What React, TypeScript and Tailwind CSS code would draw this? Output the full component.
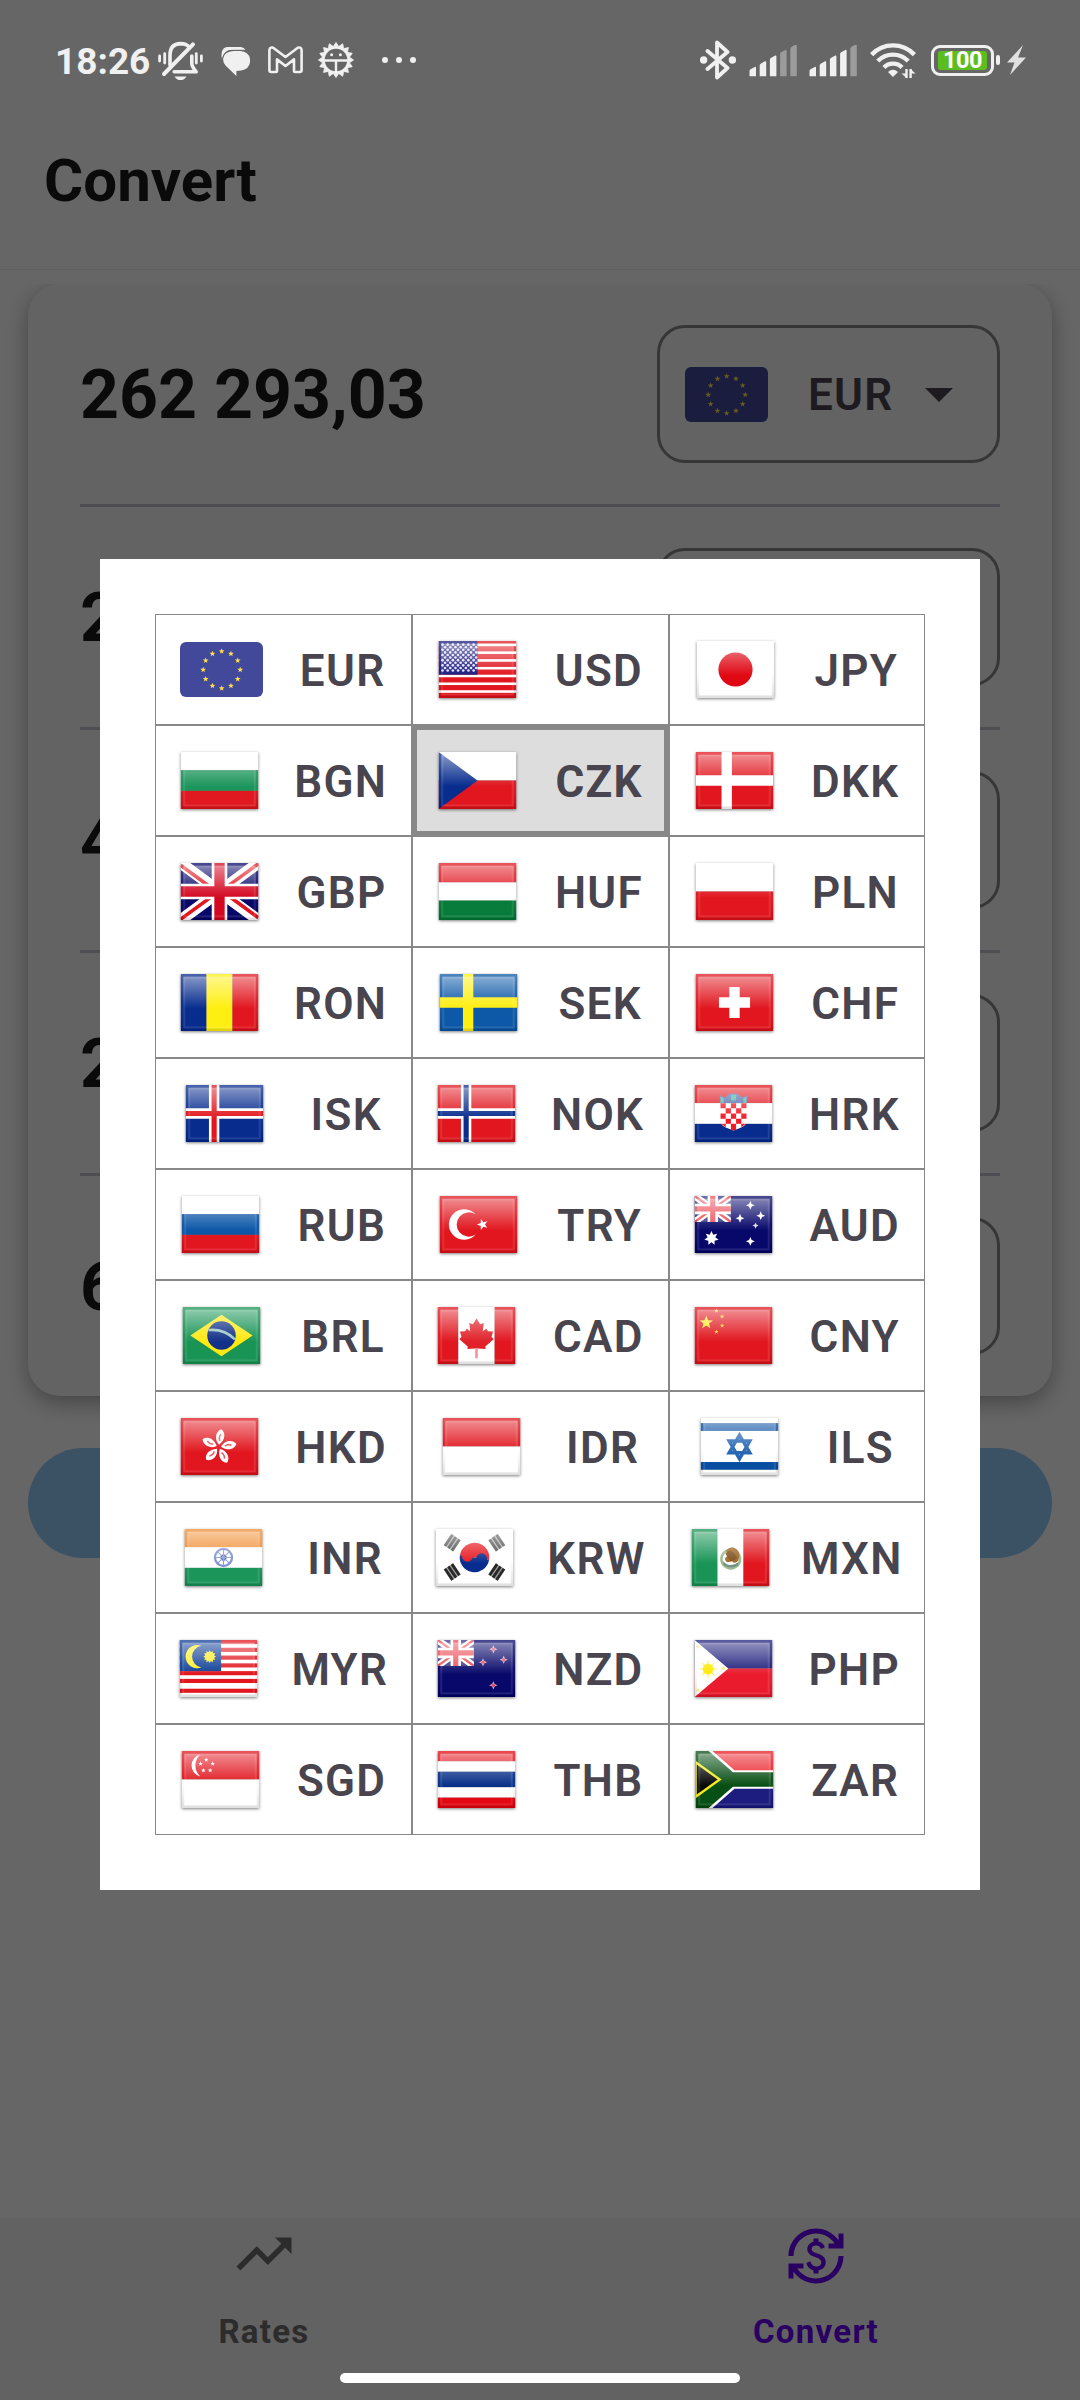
import type { ReactNode } from "react";
import { MdCurrencyExchange, MdTrendingUp } from "react-icons/md";

const RED = "#e00f18";
const NAVY = "#00268a";
const INK = "#000066";

/* ---------- flag drawing helpers (30 x 22 grid) ---------- */

function starPoints(cx: number, cy: number, r: number, n = 5, inner = 0.42, turn = 0) {
  const pts: string[] = [];
  for (let i = 0; i < n * 2; i++) {
    const rad = i % 2 === 0 ? r : r * inner;
    const a = -Math.PI / 2 + turn + (i * Math.PI) / n;
    pts.push(`${(cx + rad * Math.cos(a)).toFixed(2)},${(cy + rad * Math.sin(a)).toFixed(2)}`);
  }
  return pts.join(" ");
}

type StarProps = { x: number; y: number; r: number; n?: number; inner?: number; fill: string; turn?: number };
const Star = ({ x, y, r, n, inner, fill, turn }: StarProps) => (
  <polygon points={starPoints(x, y, r, n, inner, turn)} fill={fill} />
);

type Band = [string, number];
const Rows = ({ bands }: { bands: Band[] }) => {
  let y = 0;
  return (
    <>
      {bands.map(([c, h], i) => {
        const el = <rect key={i} x="0" y={y} width="30" height={h} fill={c} />;
        y += h;
        return el;
      })}
    </>
  );
};
const Cols = ({ bands }: { bands: Band[] }) => {
  let x = 0;
  return (
    <>
      {bands.map(([c, w], i) => {
        const el = <rect key={i} x={x} y="0" width={w} height="22" fill={c} />;
        x += w;
        return el;
      })}
    </>
  );
};

const Nordic = ({ bg, outer, inner, x }: { bg: string; outer: string; inner?: string; x: number }) => (
  <>
    <rect width="30" height="22" fill={bg} />
    <path d={`M${x} 0h4v22h-4zM0 9h30v4H0z`} fill={outer} />
    {inner && <path d={`M${x + 1} 0h2v22h-2zM0 10h30v2H0z`} fill={inner} />}
  </>
);

const Canton = () => (
  <svg x="0" y="0" width="14" height="10" viewBox="0 0 14 10">
    <rect width="14" height="10" fill={INK} />
    <path d="M0 0L14 10M14 0L0 10" stroke="#fff" strokeWidth="2.6" />
    <path d="M0 0L14 10M14 0L0 10" stroke={RED} strokeWidth="0.9" />
    <path d="M5 0h4v10H5zM0 3h14v4H0z" fill="#fff" />
    <path d="M6 0h2v10H6zM0 4h14v2H0z" fill="#e8202e" />
    <rect width="14" height="10" fill="#fff" opacity="0.2" />
  </svg>
);

const trigram = (x: number, y: number, turn: number, c: string) => (
  <g transform={`translate(${x} ${y}) rotate(${turn})`} stroke={c} strokeWidth="1.1">
    <rect x="-2.6" y="-2.2" width="5.2" height="4.4" fill={c} fillOpacity="0.45" stroke="none" />
    <path d="M-2.6 -1.6h5.2M-2.6 0h5.2M-2.6 1.6h5.2" />
  </g>
);

const usReds = [2, 5, 8, 11, 14, 17, 20];
const myReds = [0, 3, 6, 9, 12, 15, 18.8];

const FLAGS: Record<string, ReactNode> = {
  USD: (
    <>
      <rect width="30" height="22" fill="#fff" />
      <rect width="30" height="1" fill={RED} />
      {usReds.map((y) => (
        <rect key={y} y={y} width="30" height="2" fill={RED} />
      ))}
      <rect width="15" height="13" fill="#14147c" />
      {Array.from({ length: 11 }, (_, r) =>
        Array.from({ length: 7 }, (_, c) => (
          <circle key={`${r}-${c}`} cx={1.5 + c * 2 + (r % 2)} cy={1.4 + r} r="0.5" fill="#e4e4f6" />
        )),
      )}
    </>
  ),
  JPY: (
    <>
      <rect width="30" height="22" fill="#fff" />
      <circle cx="15" cy="11" r="6.6" fill="#de000c" />
    </>
  ),
  BGN: <Rows bands={[["#fff", 7], ["#159256", 8], ["#df1219", 7]]} />,
  CZK: (
    <>
      <Rows bands={[["#fff", 11], [RED, 11]]} />
      <path d="M0 0L15 11L0 22z" fill={NAVY} />
    </>
  ),
  DKK: <Nordic bg={RED} outer="#fff" x={10} />,
  GBP: (
    <>
      <rect width="30" height="22" fill={INK} />
      <path d="M0 0L30 22M30 0L0 22" stroke="#fff" strokeWidth="4.4" />
      <path d="M0 .9L13 10.4M30 21.1L17 11.6M30 .3L17 9.8M0 21.7L13 12.2" stroke={RED} strokeWidth="1.4" />
      <path d="M12 0h6v22h-6zM0 8h30v6H0z" fill="#fff" />
      <path d="M13 0h4v22h-4zM0 9h30v4H0z" fill="#d3001b" />
    </>
  ),
  HUF: <Rows bands={[[RED, 7.5], ["#fff", 7], ["#007834", 7.5]]} />,
  PLN: <Rows bands={[["#fff", 11], [RED, 11]]} />,
  RON: <Cols bands={[[NAVY, 10], ["#ffee0a", 10], [RED, 10]]} />,
  SEK: <Nordic bg="#0653a4" outer="#ffee0a" x={9} />,
  CHF: (
    <>
      <rect width="30" height="22" fill={RED} />
      <path d="M13 5h4v4h4v4h-4v4h-4v-4H9V9h4z" fill="#fff" />
    </>
  ),
  ISK: <Nordic bg={NAVY} outer="#fff" inner={RED} x={9} />,
  NOK: <Nordic bg={RED} outer="#fff" inner={NAVY} x={9} />,
  HRK: (
    <>
      <Rows bands={[[RED, 7], ["#fff", 8], [NAVY, 7]]} />
      <path d="M10 7.2L9.6 4l2 .8 1.6-1.3 1.8-.3 1.8.3 1.6 1.3 2-.8-.4 3.2z" fill="#4a63a4" />
      <path d="M10 4.6l1.2.4v2H10zM14 3.8h2V6h-2zM18.8 5l1.2-.4V7h-1.2z" fill="#3db4a0" />
      <path d="M10 7h10v6.6q0 2-2 2.8l-3 1.2-3-1.2q-2-.8-2-2.8z" fill="#fff" />
      <path
        d="M10 7h2v2h-2zM14 7h2v2h-2zM18 7h2v2h-2zM12 9h2v2h-2zM16 9h2v2h-2zM10 11h2v2h-2zM14 11h2v2h-2zM18 11h2v2h-2zM12 13h2v2h-2zM16 13h2v2h-2zM14 15h2v2.4l-1 .2-1-.2zM10.3 15H12v1.4zM18 15h1.7L18 16.4z"
        fill="#f01420"
      />
    </>
  ),
  RUB: <Rows bands={[["#fff", 7], ["#0552a5", 8], [RED, 7]]} />,
  TRY: (
    <>
      <rect width="30" height="22" fill={RED} />
      <path d="M13.9 7.1A5.9 5.9 0 1 0 13.9 14.9A4.7 4.7 0 1 1 13.9 7.1z" fill="#fff" />
      <Star x={16.6} y={11} r={2.2} fill="#fff" turn={-Math.PI / 2} />
    </>
  ),
  AUD: (
    <>
      <rect width="30" height="22" fill={INK} />
      <Canton />
      <Star x={6.5} y={16.3} r={2.8} n={7} inner={0.55} fill="#fff" />
      <Star x={21.5} y={3.6} r={1.7} n={4} fill="#fff" />
      <Star x={17.5} y={8.6} r={1.7} n={4} fill="#fff" />
      <Star x={25.5} y={7.6} r={1.7} n={4} fill="#fff" />
      <Star x={23.5} y={11.4} r={1.2} n={4} fill="#dcdcf0" />
      <Star x={21.5} y={17.5} r={1.7} n={4} fill="#fff" />
    </>
  ),
  BRL: (
    <>
      <rect width="30" height="22" fill="#129150" />
      <path d="M3 11L15 3L27 11L15 19z" fill="#ffe80a" />
      <circle cx="15" cy="11" r="5.5" fill="#0a2a86" />
      <path d="M10 8.9q6-.6 10.2 3.6" stroke="#9cc8c4" strokeWidth="1" fill="none" />
    </>
  ),
  CAD: (
    <>
      <Cols bands={[[RED, 8], ["#fff", 14], [RED, 8]]} />
      <path
        d="M15 4.4L16.4 6.7L17.8 6.2L17.4 9.4L18.8 8.4L19.4 9.4L21.4 9.5L20.8 11.5L21.6 12.4L18.4 15.2L18.5 16.2L15.6 16H14.4L11.5 16.2L11.6 15.2L8.4 12.4L9.2 11.5L8.6 9.5L10.6 9.4L11.2 8.4L12.6 9.4L12.2 6.2L13.6 6.7z"
        fill="#e01a22"
      />
      <rect x="14.5" y="15.8" width="1" height="4" fill="#f0909a" />
    </>
  ),
  CNY: (
    <>
      <rect width="30" height="22" fill={RED} />
      <Star x={4.5} y={6} r={2.7} fill="#ffee22" />
      <Star x={8.4} y={1.5} r={0.9} fill="#ffd21e" />
      <Star x={10.6} y={3.7} r={0.9} fill="#ffd21e" />
      <Star x={10.6} y={7.2} r={0.9} fill="#ffc21e" />
      <Star x={8.4} y={9.6} r={0.9} fill="#ffc21e" />
    </>
  ),
  HKD: (
    <>
      <rect width="30" height="22" fill={RED} />
      {[10, 82, 154, 226, 298].map((a) => (
        <g key={a} transform={`translate(14.7 11.2) rotate(${a})`}>
          <path d="M0 -.9C-2.6 -2.8-2 -6-.2 -6.9C1.6 -6 2.2 -3.4 0 -.9z" fill="#fff" />
          <path d="M0 -2.4q-.8 -1.3 0 -2.6" stroke="#ea5058" strokeWidth="0.6" fill="none" />
        </g>
      ))}
    </>
  ),
  IDR: <Rows bands={[[RED, 11], ["#fff", 11]]} />,
  ILS: (
    <>
      <Rows bands={[["#fff", 2], ["#0049a0", 3], ["#fff", 12], ["#0049a0", 3], ["#fff", 2]]} />
      <path d="M15 6.6L19 13.4H11zM15 15.8L11 8.9H19z" fill="none" stroke="#1f62b0" strokeWidth="1.3" />
    </>
  ),
  INR: (
    <>
      <Rows bands={[["#f08a2c", 7], ["#fff", 8], ["#159256", 7]]} />
      <circle cx="15" cy="11" r="3.3" fill="none" stroke="#7f90cc" strokeWidth="0.9" />
      <circle cx="15" cy="11" r="1.2" fill="#3a56ac" />
      <path
        d="M15 8v6M12 11h6M12.9 8.9l4.2 4.2M17.1 8.9l-4.2 4.2"
        stroke="#8c9cd4"
        strokeWidth="0.45"
      />
    </>
  ),
  KRW: (
    <>
      <rect width="30" height="22" fill="#fff" />
      <g transform="rotate(10 15 11)">
        <path d="M9.3 11a5.7 5.7 0 0 1 11.4 0z" fill="#e6141c" />
        <path d="M9.3 11a5.7 5.7 0 0 0 11.4 0z" fill={NAVY} />
        <circle cx="12.2" cy="11" r="2.1" fill="#e6141c" />
        <circle cx="17.8" cy="11" r="2.1" fill={NAVY} />
      </g>
      {trigram(6.4, 5.3, -56, "#444")}
      {trigram(23.6, 5.3, 56, "#444")}
      {trigram(6.4, 16.6, 56, "#222")}
      {trigram(23.6, 16.6, -56, "#222")}
    </>
  ),
  MXN: (
    <>
      <Cols bands={[["#129150", 10], ["#fff", 10], [RED, 10]]} />
      <circle cx="15.1" cy="11.6" r="3.6" fill="none" stroke="#9ab88a" strokeWidth="1" />
      <path
        d="M13.2 8.4q2-2.4 4.2-.6q1.8 1.8.6 4.4q-1.4 1.6-2.4.2l-1.8.4q-1.4-.6-.6-2l1.4-.6z"
        fill="#9a6220"
      />
      <path d="M13 9.5q1.5-2 3-.5t1.5 2.5l-2.5 1z" fill="#7a4c18" />
      <path d="M12.2 12.4q2.6 2.8 5.8.4v1.2q-3 1.8-5.8-.2z" fill="#6f8f86" />
    </>
  ),
  MYR: (
    <>
      <rect width="30" height="22" fill="#fff" />
      {myReds.map((y) => (
        <rect key={y} y={y} width="30" height="1.6" fill={RED} />
      ))}
      <rect width="16" height="12" fill="#093a94" />
      <path d="M8.4 2.2A4.5 4.5 0 1 0 8.4 10.6A4.25 4.25 0 0 1 8.4 2.2z" fill="#ffee22" />
      <Star x={11.6} y={6.4} r={2.5} n={12} inner={0.7} fill="#ffee22" />
    </>
  ),
  NZD: (
    <>
      <rect width="30" height="22" fill={INK} />
      <Canton />
      {[
        [21.5, 3.6],
        [17.5, 8.6],
        [25.5, 7.6],
        [21.5, 17.5],
      ].map(([x, y]) => (
        <g key={`${x}-${y}`}>
          <Star x={x} y={y} r={1.6} n={4} fill="#d8a0bc" />
          <circle cx={x} cy={y} r="0.6" fill="#e0405a" />
        </g>
      ))}
    </>
  ),
  PHP: (
    <>
      <Rows bands={[["#191979", 11], ["#ea1428", 11]]} />
      <path d="M0 0L13 11L0 22z" fill="#fff" />
      <Star x={5.2} y={11.2} r={4} n={8} inner={0.4} fill="#fff27a" />
      <circle cx="5.2" cy="11.2" r="2" fill="#ffe800" />
      <Star x={1.4} y={2.6} r={1} fill="#ffe95a" />
      <Star x={1.4} y={19.4} r={1} fill="#ffe95a" />
      <Star x={11} y={11} r={1} fill="#ffe95a" />
    </>
  ),
  SGD: (
    <>
      <Rows bands={[[RED, 11], ["#fff", 11]]} />
      <path d="M7.2 1.4A4.3 4.3 0 0 0 7.2 9.8A5.6 5.6 0 0 1 7.2 1.4z" fill="#fff" />
      {[
        [9.5, 3.4],
        [12, 4.9],
        [7.3, 4.9],
        [8.4, 7.5],
        [11, 7.5],
      ].map(([x, y]) => (
        <Star key={`${x}-${y}`} x={x} y={y} r={0.9} fill="#fff" />
      ))}
    </>
  ),
  THB: <Rows bands={[["#e2000c", 4], ["#fff", 4], ["#002a84", 6], ["#fff", 4], ["#e2000c", 4]]} />,
  ZAR: (
    <>
      <Rows bands={[["#e8141c", 11], ["#16167c", 11]]} />
      <path d="M0 0h6.5L15 7.4h15v7.2H15L6.5 22H0z" fill="#fff" />
      <path d="M0 0h5L14.4 8.2H30v5.6H14.4L5 22H0z" fill="#004a0e" />
      <path d="M0 4.3L9.3 11L0 17.7z" fill="#000" stroke="#f2ea12" strokeWidth="0.9" />
    </>
  ),
};

const EuFlag = () => (
  <svg width="83" height="55" viewBox="0 0 83 55" className="block shrink-0">
    <rect width="83" height="55" rx="6" fill="#42499a" />
    {Array.from({ length: 12 }, (_, i) => {
      const a = (i * Math.PI) / 6;
      return (
        <polygon
          key={i}
          points={starPoints(41.7 + 18.5 * Math.sin(a), 27.8 - 18.5 * Math.cos(a), 3)}
          fill="#ffe050"
        />
      );
    })}
  </svg>
);

const GlossDefs = () => (
  <svg width="0" height="0" className="absolute">
    <defs>
      <linearGradient id="gloss" x1="0" y1="0" x2="0" y2="1">
        <stop offset="0" stopColor="#fff" stopOpacity="0.52" />
        <stop offset="0.5" stopColor="#fff" stopOpacity="0.12" />
        <stop offset="0.62" stopColor="#fff" stopOpacity="0.03" />
        <stop offset="1" stopColor="#fff" stopOpacity="0.03" />
      </linearGradient>
      <linearGradient id="rim" x1="0" y1="0" x2="0" y2="1">
        <stop offset="0" stopColor="#fff" stopOpacity="0.28" />
        <stop offset="0.5" stopColor="#fff" stopOpacity="0.06" />
        <stop offset="1" stopColor="#000" stopOpacity="0.12" />
      </linearGradient>
    </defs>
  </svg>
);

const Flag = ({ code }: { code: string }) =>
  code === "EUR" ? (
    <EuFlag />
  ) : (
    <svg
      width="83"
      height="63"
      viewBox="-1 -1.15 32 24.3"
      className="block shrink-0 drop-shadow-[0_1.5px_1.5px_rgba(0,0,0,0.5)]"
    >
      <svg x="0" y="0" width="30" height="22" viewBox="0 0 30 22">
        {FLAGS[code]}
        <rect x="1" y="1" width="28" height="20" fill="url(#gloss)" />
        <rect x="0.5" y="0.5" width="29" height="21" fill="none" stroke="url(#rim)" strokeWidth="1" />
        <rect x="1.4" y="1.4" width="27.2" height="19.2" fill="none" stroke="#fff" strokeOpacity="0.1" strokeWidth="0.8" />
      </svg>
    </svg>
  );

/* ---------- status bar ---------- */

const Signal = ({ level }: { level: number }) => (
  <svg width="48" height="32" viewBox="0 0 48 32">
    {[8, 13.6, 19.3, 25, 30.4].map((h, i) => (
      <path
        key={i}
        d={`M${0.5 + i * 10.2} 31.5v${-(h - 3)}q0 -1 1 -1.6l4.3 -2.4q1.2 -.4 1.2 .8v${h}q0 .6 -.6 .6h-5.3q-.6 0 -.6 -.6z`}
        transform="translate(0 -.6)"
        fill={i < level ? "#f0f0f0" : "#9b9b9b"}
      />
    ))}
  </svg>
);

const StatusBar = () => (
  <div className="relative z-20 flex h-[120px] items-center pl-[55px] pr-[54px] text-[#f0f0f0]">
    <span className="mt-[3px] w-[103px] text-[37px] font-bold leading-[44px]">18:26</span>
    {/* muted bell */}
    <svg width="45" height="40" viewBox="0 0 45 40" className="mt-[2px]" fill="none" stroke="currentColor" strokeLinecap="round">
      <path d="M12 24V14Q12 3 22.5 2.6Q29 2.8 31.4 6.4" strokeWidth="3.6" />
      <path d="M6 33L35 3.4" strokeWidth="4" />
      <path d="M33.8 15v7.5q0 3 4.4 8.3h-22" strokeWidth="3.6" strokeLinejoin="round" />
      <path d="M16.5 35.4h12q-2.2 3.6-6 3.6t-6-3.6z" fill="currentColor" stroke="none" />
      <path d="M1.6 15v5M43.4 15v5" strokeWidth="2.8" />
      <path d="M6.7 12.6v9.4M38.3 12.6v9.4" strokeWidth="2.8" />
    </svg>
    {/* chat */}
    <svg width="29" height="30" viewBox="0 0 29 30" className="ml-[18px] mt-[2px]">
      <path d="M1 13Q0 10 .8 6Q2 1.6 6 1h14q3 .4 4.6 3L9 4Q3 5.4 1 13z" fill="#f0f0f0" />
      <path d="M12.5 5h6.6q10 1 10 9.6t-9 10L15.4 25v5L5 20Q2 17 2 13q1-7.4 10.5-8z" fill="#f0f0f0" />
      <path d="M1.6 12.5Q3 4.5 11 4.3h14" stroke="#666" strokeWidth=".9" fill="none" />
    </svg>
    {/* mail */}
    <svg width="35" height="28" viewBox="0 0 35 28" className="ml-[18px]" fill="none" stroke="currentColor" strokeLinejoin="round">
      <path
        d="M1.4 24V4.2Q1.8 .6 5.2 1.7L17.5 11 29.8 1.7Q33.2 .6 33.6 4.2V24q0 2-2 2h-4.4q-1.2 0-1.2-1.2V13.4L17.5 20 9 13.4v11.4Q9 26 7.8 26H3.4q-2 0-2-2z"
        strokeWidth="2.6"
      />
    </svg>
    {/* gear robot */}
    <svg width="36" height="36" viewBox="0 0 36 36" className="ml-[15px]">
      <polygon
        points={starPoints(18, 18, 17.6, 16, 0.78)}
        fill="#f0f0f0"
        stroke="#f0f0f0"
        strokeWidth="0.8"
        strokeLinejoin="round"
      />
      <circle cx="18" cy="18" r="11.3" fill="#666" />
      <path d="M6 18.5h24M18 18.5v13" stroke="#f0f0f0" strokeWidth="2.4" />
      <circle cx="13.6" cy="12.7" r="1.5" fill="#f0f0f0" />
      <circle cx="22.4" cy="12.7" r="1.5" fill="#f0f0f0" />
    </svg>
    <div className="ml-[28px] flex gap-2">
      <i className="size-[6px] rounded-full bg-[#f0f0f0]" />
      <i className="size-[6px] rounded-full bg-[#f0f0f0]" />
      <i className="size-[6px] rounded-full bg-[#f0f0f0]" />
    </div>

    <div className="ml-auto flex items-center">
      {/* bluetooth */}
      <svg
        width="36"
        height="40"
        viewBox="0 0 36 40"
        fill="none"
        stroke="currentColor"
        strokeWidth="3.8"
        strokeLinejoin="round"
        strokeLinecap="round"
      >
        <path d="M7.5 11L27.5 28 17 37.5V2.5L27.5 12 7.5 29" />
        <circle cx="3.6" cy="20" r="1.8" />
        <circle cx="32.4" cy="20" r="1.8" />
      </svg>
      <div className="ml-[13px] mt-px">
        <Signal level={3} />
      </div>
      <div className="ml-3 mt-px">
        <Signal level={4} />
      </div>
      {/* wifi */}
      <svg width="46" height="36" viewBox="0 0 46 36" className="ml-[13px]" fill="none" stroke="currentColor" strokeWidth="4.4">
        <path d="M1.6 12.6Q10.5 3.4 23 3.4T44.4 12.6" />
        <path d="M7.8 19Q14 12.6 23 12.6T38.2 19" />
        <path d="M14 25.4Q17.6 21.6 23 21.6T32 25.4" />
        <path d="M18 30q5-4.4 10 0l-5 5z" fill="currentColor" stroke="none" />
        <path d="M36.5 27v9M40.6 27v9" strokeWidth="2.4" />
        <path d="M31.5 31.5l4.5 4v-4zM45.5 31.5l-4.5-4v4z" fill="currentColor" stroke="none" />
      </svg>
      {/* battery */}
      <div className="ml-[15px] flex h-[31px] w-[63px] items-center justify-center rounded-[9px] border-[3px] border-[#f0f0f0]">
        <div className="flex h-[19px] w-[49px] items-center justify-center rounded-[3px] bg-[#5bbd1e] text-[23.5px] font-bold leading-[20px] tracking-[-0.4px] text-white">
          100
        </div>
      </div>
      <i className="ml-[2px] h-[10px] w-[4px] rounded-[2px] bg-[#f0f0f0]" />
      <svg width="19" height="30" viewBox="0 0 19 30" className="ml-[7px]">
        <path d="M16 0L0 17.5h7.5L3 30 19 12.5h-8z" fill="#e0e0e0" />
      </svg>
    </div>
  </div>
);

/* ---------- converter ---------- */

type Amount = { id: number; value: string; code?: string };

const AMOUNTS: Amount[] = [
  { id: 1, value: "262 293,03", code: "EUR" },
  { id: 2, value: "2" },
  { id: 3, value: "4" },
  { id: 4, value: "2" },
  { id: 5, value: "6" },
];

const AmountRow = ({ value, code }: Amount) => (
  <div className="flex h-[220px] items-center justify-between">
    <span className="mt-[2px] text-[68px] font-bold leading-[81px] text-[#191919]">{value}</span>
    <div className="flex h-[138px] w-[343px] items-center rounded-[28px] border-[3px] border-[#888] pl-[25px]">
      {code && (
        <>
          <Flag code={code} />
          <span className="ml-[40px] mt-[2px] w-[89px] text-[44px] font-semibold leading-[52px] tracking-[1.3px] text-[#49454f]">
            {code}
          </span>
          <svg width="28" height="14" viewBox="0 0 28 14" className="ml-[28px] mt-[2px]">
            <path d="M0 0h28L14 14z" fill="#49454f" />
          </svg>
        </>
      )}
    </div>
  </div>
);

const CODES = [
  "EUR", "USD", "JPY", "BGN", "CZK", "DKK", "GBP", "HUF", "PLN", "RON", "SEK",
  "CHF", "ISK", "NOK", "HRK", "RUB", "TRY", "AUD", "BRL", "CAD", "CNY", "HKD",
  "IDR", "ILS", "INR", "KRW", "MXN", "MYR", "NZD", "PHP", "SGD", "THB", "ZAR",
];

const CurrencyCell = ({ code, selected }: { code: string; selected: boolean }) => (
  <div
    className={
      selected
        ? "flex items-center justify-around border-[5px] border-[#888] bg-[#ddd] pl-px pr-[3px] font-bold"
        : "flex items-center justify-around border border-[#888] pl-[5px] pr-[7px] font-semibold"
    }
  >
    <Flag code={code} />
    <span className="mt-[2px] text-[44px] leading-[52px] tracking-[1.3px] text-[#49454f]">{code}</span>
  </div>
);

export default function App() {
  return (
    <div className="relative flex h-[2400px] w-[1080px] flex-col overflow-hidden bg-white font-['Roboto',sans-serif]">
      <GlossDefs />
      <StatusBar />
      <header className="flex h-[150px] items-center border-b border-[#eee] pb-[28px] pl-[44px]">
        <h1 className="text-[60px] font-bold leading-[70px] text-[#191919]">Convert</h1>
      </header>

      <main className="flex-1 overflow-hidden pt-[14px]">
        <div className="overflow-hidden px-7 pb-[52px]">
          <section className="h-[1112px] rounded-[32px] bg-[#f7f7f7] px-[52px] shadow-[0_7px_22px_rgba(0,0,0,0.33)]">
            {AMOUNTS.map((row, i) => (
              <div key={row.id} className={i > 0 ? "border-t-[3px] border-[#c4c1cd]" : ""}>
                <AmountRow {...row} />
              </div>
            ))}
          </section>
        </div>
        <div className="mx-7 h-[110px] rounded-full bg-[#93cafa]" />
      </main>

      <nav className="flex h-[182px] justify-between bg-[#f4f4f4] px-[176px] font-bold">
        <div className="flex w-[176px] flex-col items-center pt-[3px] text-[#6e6e6e]">
          <MdTrendingUp size={66} />
          <span className="mt-[25px] text-[33px] leading-[39px] tracking-[1.3px]">Rates</span>
        </div>
        <div className="flex w-[176px] flex-col items-center pt-[8px] text-[#6a00f7]">
          <MdCurrencyExchange size={60} />
          <span className="mt-[26px] text-[33px] leading-[39px] tracking-[1.3px]">Convert</span>
        </div>
      </nav>

      <div className="absolute inset-0 z-10 bg-black/60">
        <div className="absolute left-[100px] top-[559px] w-[880px] bg-white p-[55px]">
          <div className="grid auto-rows-[111px] grid-cols-[257px_257px_256px]">
            {CODES.map((code) => (
              <CurrencyCell key={code} code={code} selected={code === "CZK"} />
            ))}
          </div>
        </div>
      </div>
      <div className="absolute bottom-[17px] left-[340px] z-20 h-[10px] w-[400px] rounded-full bg-white" />
    </div>
  );
}
